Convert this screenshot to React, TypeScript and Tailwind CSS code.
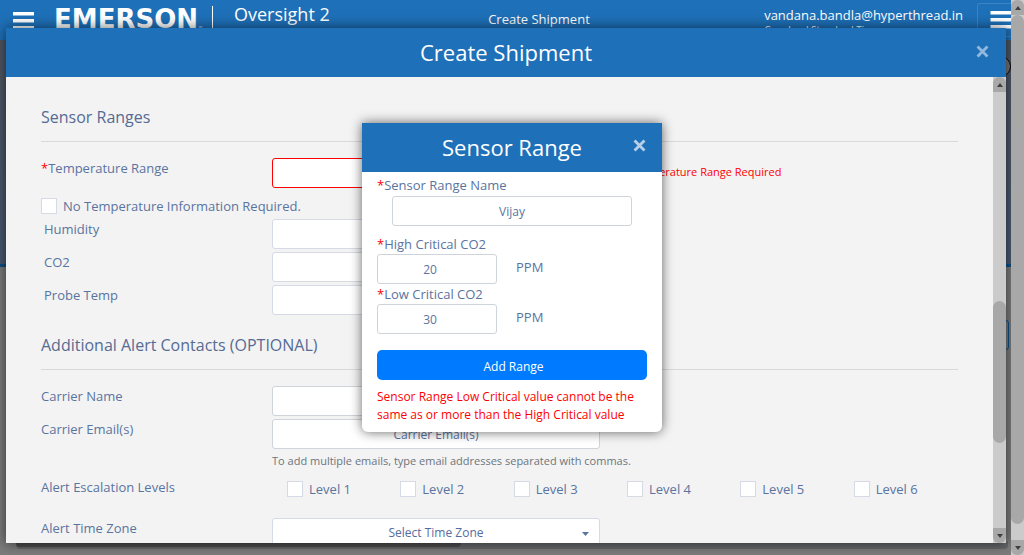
import React from "react";

const SELECT =
  "block h-[30px] w-full appearance-none rounded-[3px] border bg-white px-6 text-center text-[12px] text-[#566b9e] [text-align-last:center]";

const FIELD =
  "block h-[30px] w-full rounded-[3px] border border-[#ced4da] bg-white px-3 text-center text-[12px] placeholder:text-[#5a74a0]";

function Caret({ up = false, className = "h-[5px] w-2" }: { up?: boolean; className?: string }) {
  return (
    <svg viewBox="0 0 8 5" preserveAspectRatio="none" className={className} aria-hidden="true">
      <path d={up ? "M4 0 8 5H0z" : "M0 0H8L4 5z"} fill="currentColor" />
    </svg>
  );
}

function ScrollRail({ before, thumb, after }: { before: string; thumb: string; after: string }) {
  return (
    <div className="flex w-[13px] shrink-0 flex-col bg-[#cbcbcb]" aria-hidden="true">
      <div className="flex h-[15px] shrink-0 items-center justify-center rounded-t-md bg-[#a8a8a8] text-[#404040]">
        <Caret up className="h-1 w-[6px]" />
      </div>
      <div className={before} />
      <div className={`rounded-full bg-[#a8a8a8] ${thumb}`} />
      <div className={after} />
      <div className="flex h-[15px] shrink-0 items-center justify-center rounded-b-md bg-[#a8a8a8] text-[#404040]">
        <Caret className="h-1 w-[6px]" />
      </div>
    </div>
  );
}

function CloseIcon() {
  return (
    <svg viewBox="0 0 12 12" className="size-[13px]" aria-hidden="true">
      <path d="M1.4 1.4 10.6 10.6M10.6 1.4 1.4 10.6" stroke="currentColor" strokeWidth="2.6" />
    </svg>
  );
}

function Bars({ className }: { className: string }) {
  return (
    <svg viewBox="0 0 21 18" className={className} fill="white" aria-hidden="true">
      <path d="M0 0h21v3.4H0zM0 7h21v3.4H0zM0 14h21v3.4H0z" />
    </svg>
  );
}

function SectionTitle({ children }: { children: React.ReactNode }) {
  return (
    <h2 className="mb-4 border-b border-[#d8d9db] pb-3 text-[16px] leading-6 text-[#566b94]">
      {children}
    </h2>
  );
}

function Row({
  id,
  label,
  indent,
  children,
  note,
}: {
  id: string;
  label: React.ReactNode;
  indent?: boolean;
  children: React.ReactNode;
  note?: React.ReactNode;
}) {
  return (
    <div className="grid grid-cols-[231fr_328fr_358fr]">
      <label htmlFor={id} className={`leading-5 ${indent ? "pl-[3px]" : ""}`}>
        {label}
      </label>
      <div className="relative min-w-0">{children}</div>
      {note}
    </div>
  );
}

function Tick({ id, label }: { id: string; label: string }) {
  return (
    <div className="flex items-center gap-[6px]">
      <input
        id={id}
        type="checkbox"
        className="size-4 shrink-0 appearance-none border border-[#d5dae6] bg-white checked:bg-[#1e70b8]"
      />
      <label htmlFor={id} className="whitespace-nowrap leading-4">
        {label}
      </label>
    </div>
  );
}

const Star = () => <span className="text-[#f00]">*</span>;

function SensorRangeDialog() {
  return (
    <section
      role="dialog"
      aria-label="Sensor Range"
      className="absolute left-1/2 top-[123px] w-[300px] -translate-x-1/2 rounded-b-md bg-white text-[13px] text-[#5a74a0] shadow-[0_0_12px_rgba(0,0,0,0.6)]"
    >
      <header className="relative flex h-[49px] items-center justify-center bg-[#1e70b8] text-white">
        <h2 className="text-[22px]">Sensor Range</h2>
        <button type="button" aria-label="Close" className="absolute right-4 top-4 text-[#b5d0e8]">
          <CloseIcon />
        </button>
      </header>
      <form className="px-[15px] pb-2 pt-[3px]" onSubmit={(e) => e.preventDefault()}>
        <label htmlFor="range-name" className="block leading-5">
          <Star />
          Sensor Range Name
        </label>
        <div className="mb-2 mt-px px-[15px]">
          <input id="range-name" defaultValue="Vijay" className={FIELD} />
        </div>
        <label htmlFor="high-critical" className="block leading-5">
          <Star />
          High Critical CO2
        </label>
        <div className="flex gap-[19px]">
          <input
            id="high-critical"
            defaultValue="20"
            className="h-[30px] w-[120px] rounded-[3px] border border-[#ced4da] pr-[14px] text-center text-[12px]"
          />
          <span className="leading-[26px]">PPM</span>
        </div>
        <label htmlFor="low-critical" className="block leading-5">
          <Star />
          Low Critical CO2
        </label>
        <div className="flex gap-[19px]">
          <input
            id="low-critical"
            defaultValue="30"
            className="h-[30px] w-[120px] rounded-[3px] border border-[#ced4da] pr-[14px] text-center text-[12px]"
          />
          <span className="leading-[26px]">PPM</span>
        </div>
        <button
          type="submit"
          className="mb-2 mt-4 block h-[30px] w-full rounded-[5px] bg-[#007bff] pl-[3px] pt-[3px] text-[12px] text-white"
        >
          Add Range
        </button>
        <p className="text-[12px] leading-[18px] text-[#f00]">
          Sensor Range Low Critical value cannot be the same as or more than the High Critical value
        </p>
      </form>
    </section>
  );
}

function ShipmentDialog() {
  return (
    <section
      role="dialog"
      aria-label="Create Shipment"
      className="absolute bottom-3 left-[6px] right-[5px] top-7 flex flex-col bg-[#f3f3f3] text-[13px] text-[#5a74a0] shadow-[0_0_12px_rgba(0,0,0,0.6)]"
    >
      <header className="relative flex h-[49px] shrink-0 items-center justify-center bg-[#1e70b8] text-white">
        <h1 className="text-[22px]">Create Shipment</h1>
        <button type="button" aria-label="Close" className="absolute right-[17px] top-[17px] text-[#92b9dd]">
          <CloseIcon />
        </button>
      </header>
      <div className="flex min-h-0 flex-1">
        <form className="min-w-0 flex-1 overflow-hidden px-[35px] pt-7" onSubmit={(e) => e.preventDefault()}>
          <SectionTitle>Sensor Ranges</SectionTitle>
          <Row
            id="temperature"
            label={
              <>
                <Star />
                Temperature Range
              </>
            }
            note={<p className="pl-[30px] text-[11px] leading-7 text-[#f00]">Temperature Range Required</p>}
          >
            <select id="temperature" className={`${SELECT} border-[#f00]`}>
              <option>Select Temperature Range</option>
            </select>
          </Row>
          <div className="mb-[5px] mt-[10px]">
            <Tick id="no-temperature" label="No Temperature Information Required." />
          </div>
          <div className="mb-[18px] flex flex-col gap-[3px]">
            <Row id="humidity" label="Humidity" indent>
              <select id="humidity" className={`${SELECT} border-[#d5dae6]`}>
                <option>Select Humidity Range</option>
              </select>
            </Row>
            <Row id="co2" label="CO2" indent>
              <select id="co2" className={`${SELECT} border-[#d5dae6]`}>
                <option>Select CO2 Range</option>
              </select>
            </Row>
            <Row id="probe" label="Probe Temp" indent>
              <select id="probe" className={`${SELECT} border-[#d5dae6]`}>
                <option>Select Probe Range</option>
              </select>
            </Row>
          </div>
          <SectionTitle>Additional Alert Contacts (OPTIONAL)</SectionTitle>
          <div className="flex flex-col gap-[3px]">
            <Row id="carrier" label="Carrier Name">
              <input id="carrier" placeholder="Carrier Name" className={FIELD} />
            </Row>
            <Row id="emails" label="Carrier Email(s)">
              <input id="emails" placeholder="Carrier Email(s)" className={FIELD} />
              <p className="mt-[3px] whitespace-nowrap text-[11px] leading-[18px] text-[#6c757d]">
                To add multiple emails, type email addresses separated with commas.
              </p>
            </Row>
          </div>
          <fieldset className="mb-[21px] mt-[7px] grid grid-cols-[231fr_686fr]">
            <legend className="contents">
              <span className="leading-5">Alert Escalation Levels</span>
            </legend>
            <div className="grid grid-cols-6 gap-[9px] pl-[15px] pt-1">
              {[1, 2, 3, 4, 5, 6].map((n) => (
                <Tick key={n} id={`level-${n}`} label={`Level ${n}`} />
              ))}
            </div>
          </fieldset>
          <Row id="zone" label="Alert Time Zone">
            <select id="zone" className={`${SELECT} border-[#d5dae6]`}>
              <option>Select Time Zone</option>
            </select>
            <Caret className="pointer-events-none absolute right-[11px] top-[14px] h-1 w-[7px]" />
          </Row>
        </form>
        <ScrollRail before="grow-[210]" thumb="grow-[143]" after="grow-[85]" />
      </div>
    </section>
  );
}

export default function App() {
  return (
    <div className="relative flex h-screen overflow-hidden bg-[#7b7b7b] font-['Open_Sans',sans-serif]">
      <div className="relative flex min-w-0 flex-1 flex-col overflow-hidden">
        <header className="flex h-10 shrink-0 items-start overflow-hidden bg-[#1e70b8] text-white">
          <button type="button" aria-label="Menu" className="ml-[13px] mt-3">
            <Bars className="h-[18px] w-[21px]" />
          </button>
          <div className="ml-5 mt-1 flex items-end font-['DejaVu_Sans',sans-serif] leading-[30px]">
            <span className="text-[26px] font-bold">EMERSON</span>
            <span className="text-[5px] leading-3">™</span>
          </div>
          <div className="ml-[9px] mt-[6px] h-8 w-px bg-white" />
          <div className="ml-[21px] mt-[2px]">
            <p className="text-[18px] leading-6">Oversight 2</p>
            <p className="pl-[2px] text-[9px] leading-3">2.26.0.612</p>
          </div>
          <p className="mt-[9px] flex-1 pr-4 text-center text-[13px] leading-5">Create Shipment</p>
          <div className="mt-[6px]">
            <p className="text-[13px] leading-[18px]">vandana.bandla@hyperthread.in</p>
            <p className="text-[10px] leading-3">Copeland Standard Time</p>
          </div>
          <button
            type="button"
            aria-label="Options"
            className="ml-[14px] mt-[3px] h-[34px] w-[34px] shrink-0 overflow-hidden rounded-l-[3px] border border-r-0 border-[#3d83c2] pl-3"
          >
            <Bars className="h-[18px] w-[22px]" />
          </button>
        </header>
        <div className="flex h-[227px] shrink-0 items-start justify-end border-b-[3px] border-[#0d4f86] bg-linear-to-b from-[#4e5662] to-[#485872]">
          <span className="mt-4 size-[21px] rounded-full border border-black bg-[#757575]" />
        </div>
        <div className="flex flex-1 flex-col items-end pr-[2px] pt-[53px]">
          <span className="h-[30px] w-5 rounded-[3px] border border-[#0d4f86]" />
        </div>
        <div className="mb-[6px] ml-4 mr-[3px] h-2 rounded-b bg-[#646668]">
          <div className="h-[6px] w-[445px] rounded-b bg-[#4c4c4c]" />
        </div>
        <ShipmentDialog />
      </div>
      <ScrollRail before="h-0" thumb="grow-[509]" after="grow-[16]" />
      <SensorRangeDialog />
    </div>
  );
}
